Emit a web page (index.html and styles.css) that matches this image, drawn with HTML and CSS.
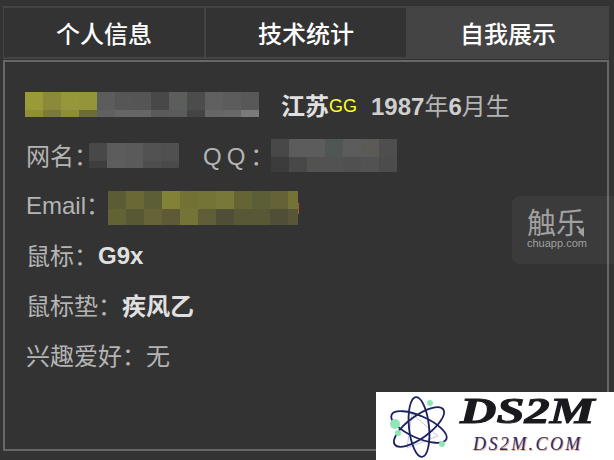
FILE: index.html
```html
<!DOCTYPE html>
<html lang="zh-CN">
<head>
    <meta charset="UTF-8">
    <title>个人信息</title>
    <link rel="stylesheet" href="styles.css">
</head>
<body>
    <div class="profile">
        <!-- tabs -->
        <div class="tabs">
            <div class="tab">个人信息</div>
            <div class="tab">技术统计</div>
            <div class="tab tab-active">自我展示</div>
        </div>

        <!-- info panel -->
        <div class="panel">
            <div class="row">
                <svg class="mosaic mosaic-id" width="234" height="25" shape-rendering="crispEdges">
                    <rect x="0" width="18" height="18" fill="#9a9a38"/><rect x="18" width="18" height="18" fill="#8a8a3a"/><rect x="36" width="18" height="18" fill="#96963a"/><rect x="54" width="18" height="18" fill="#94943a"/><rect x="72" width="18" height="18" fill="#5c5c5c"/><rect x="90" width="18" height="18" fill="#565656"/><rect x="108" width="18" height="18" fill="#555555"/><rect x="126" width="18" height="18" fill="#484848"/><rect x="144" width="18" height="18" fill="#5c5e5c"/><rect x="162" width="18" height="18" fill="#4c4c4c"/><rect x="180" width="18" height="18" fill="#606060"/><rect x="198" width="18" height="18" fill="#5c5c5c"/><rect x="216" width="18" height="18" fill="#585858"/>
                    <rect x="0" y="18" width="18" height="7" fill="#8f8f38"/><rect x="18" y="18" width="18" height="7" fill="#7a7a3c"/><rect x="36" y="18" width="18" height="7" fill="#8c8c3a"/><rect x="54" y="18" width="18" height="7" fill="#6c6c3a"/><rect x="72" y="18" width="18" height="7" fill="#606060"/><rect x="90" y="18" width="18" height="7" fill="#666666"/><rect x="108" y="18" width="18" height="7" fill="#666666"/><rect x="126" y="18" width="18" height="7" fill="#5a5a5a"/><rect x="144" y="18" width="18" height="7" fill="#5a5c5c"/><rect x="162" y="18" width="18" height="7" fill="#444444"/><rect x="180" y="18" width="18" height="7" fill="#666666"/><rect x="198" y="18" width="18" height="7" fill="#686868"/><rect x="216" y="18" width="18" height="7" fill="#7a7a7a"/>
                </svg>
                <b class="place">江苏</b><span class="gg">GG</span>
                <span class="birth"><b>1987</b>年<b>6</b>月生</span>
            </div>
            <div class="row">
                <span>网名：</span>
                <svg class="mosaic mosaic-name" width="90" height="25" shape-rendering="crispEdges">
                    <rect x="0" width="18" height="18" fill="#484848"/><rect x="18" width="18" height="18" fill="#5c5c5c"/><rect x="36" width="18" height="18" fill="#5a5a5a"/><rect x="54" width="18" height="18" fill="#525252"/><rect x="72" width="18" height="18" fill="#505050"/>
                    <rect x="0" y="18" width="18" height="7" fill="#3e3e3e"/><rect x="18" y="18" width="18" height="7" fill="#5e5e5e"/><rect x="36" y="18" width="18" height="7" fill="#5a5a5a"/><rect x="54" y="18" width="18" height="7" fill="#4e4e4e"/><rect x="72" y="18" width="18" height="7" fill="#4a4a4a"/>
                </svg>
                <span class="qq">QQ：</span>
                <svg class="mosaic mosaic-qq" width="126" height="33" shape-rendering="crispEdges">
                    <rect x="0" width="18" height="18" fill="#484848"/><rect x="18" width="18" height="18" fill="#5c5c5c"/><rect x="36" width="18" height="18" fill="#5c5c5c"/><rect x="54" width="18" height="18" fill="#505654"/><rect x="72" width="18" height="18" fill="#5c5c5c"/><rect x="90" width="18" height="18" fill="#5c5a56"/><rect x="108" width="18" height="18" fill="#4e4e4e"/>
                    <rect x="0" y="18" width="18" height="15" fill="#3c3c3c"/><rect x="18" y="18" width="18" height="15" fill="#484848"/><rect x="36" y="18" width="18" height="15" fill="#525250"/><rect x="54" y="18" width="18" height="15" fill="#525252"/><rect x="72" y="18" width="18" height="15" fill="#505050"/><rect x="90" y="18" width="18" height="15" fill="#525252"/><rect x="108" y="18" width="18" height="15" fill="#4c4c4c"/>
                </svg>
            </div>
            <div class="row">
                <span class="email-label">Email：</span>
                <svg class="mosaic mosaic-email" width="191" height="34" shape-rendering="crispEdges">
                    <rect x="0" width="18" height="18" fill="#5c5c34"/><rect x="18" width="18" height="18" fill="#6a6834"/><rect x="36" width="18" height="18" fill="#5c5e36"/><rect x="54" width="18" height="18" fill="#828236"/><rect x="72" width="18" height="18" fill="#727234"/><rect x="90" width="18" height="18" fill="#747436"/><rect x="108" width="18" height="18" fill="#787838"/><rect x="126" width="18" height="18" fill="#646434"/><rect x="144" width="18" height="18" fill="#5c5e36"/><rect x="162" width="18" height="18" fill="#646236"/><rect x="180" width="10" height="18" fill="#737336"/>
                    <rect x="0" y="18" width="18" height="16" fill="#626234"/><rect x="18" y="18" width="18" height="16" fill="#585834"/><rect x="36" y="18" width="18" height="16" fill="#666436"/><rect x="54" y="18" width="18" height="16" fill="#5e5a36"/><rect x="72" y="18" width="18" height="16" fill="#747436"/><rect x="90" y="18" width="18" height="16" fill="#605e36"/><rect x="108" y="18" width="18" height="16" fill="#504e36"/><rect x="126" y="18" width="18" height="16" fill="#585836"/><rect x="144" y="18" width="18" height="16" fill="#585836"/><rect x="162" y="18" width="18" height="16" fill="#504e36"/><rect x="180" y="18" width="10" height="16" fill="#585636"/>
                    <rect x="190" y="12" width="1" height="11" fill="#b0552a"/>
                </svg>
            </div>
            <div class="row"><span>鼠标：</span><b class="mouse">G9x</b></div>
            <div class="row"><span>鼠标垫：</span><b>疾风乙</b></div>
            <div class="row"><span>兴趣爱好：</span><span>无</span></div>
        </div>
    </div>

    <!-- watermarks -->
    <div class="chuapp">
        <div class="chuapp-name">触乐</div>
        <div class="chuapp-url">chuapp.com</div>
        <div class="chuapp-mark"></div>
    </div>
    <div class="ds2m">
        <svg class="ds2m-atom" width="84" height="68" viewBox="0 0 84 68" fill="none">
            <path d="M36 22 L62 44 L31 56 Z" stroke="#c4c8d4" stroke-width="1"/>
            <g stroke="#1c2260" stroke-width="1.8">
                <ellipse cx="43" cy="35" rx="30" ry="11" transform="rotate(24 43 35)"/>
                <ellipse cx="43" cy="35" rx="30" ry="11" transform="rotate(-36 43 35)"/>
                <ellipse cx="43" cy="35" rx="10" ry="30" transform="rotate(-6 43 35)"/>
            </g>
            <circle cx="19" cy="32" r="5" fill="#8ee8b4"/>
            <circle cx="54" cy="11" r="3" fill="#8ee8b4"/>
            <circle cx="22" cy="41" r="3" fill="#8ee8b4"/>
            <circle cx="66" cy="52" r="3" fill="#8ee8b4"/>
        </svg>
        <div class="ds2m-text">
            <div class="ds2m-name">DS2M</div>
            <div class="ds2m-url">DS2M.COM</div>
        </div>
    </div>
</body>
</html>
```

FILE: styles.css
```css
html, body {
    margin: 0;
    padding: 0;
}

body {
    position: relative;
    width: 614px;
    height: 460px;
    overflow: hidden;
    background-color: #333333;
    color: #b4b4b4;
    font-family: "Liberation Sans", "Noto Sans CJK SC", sans-serif;
    font-size: 24px;
}

.profile {
    padding: 6px 5px 0 3px;
}

.tabs {
    display: flex;
    height: 53px;
}

.tab {
    flex: 1;
    display: flex;
    align-items: center;
    justify-content: center;
    border: 2px solid #444444;
    border-left-width: 1px;
    border-right-width: 1px;
    color: #ffffff;
    font-size: 24px;
    font-weight: 500;
}

.tab-active {
    background-color: #444444;
}

.panel {
    height: 391px;
    margin-top: 1px;
    padding: 17px 0 0 21px;
    border: 2px solid #666666;
    box-sizing: border-box;
}

.row {
    display: flex;
    align-items: center;
    height: 50px;
}

.row b {
    color: #e0e0e0;
}

.mosaic {
    flex: none;
}

.mosaic-id {
    margin: 1px 0 0 -1px;
}

.mosaic-name {
    margin: 3px 24px 0 -9px;
}

.mosaic-qq {
    margin: 3px 0 0 -8px;
}

.mosaic-email {
    margin: 8px 0 0 -2px;
}

.email-label {
    margin-bottom: 2px;
}

.mouse {
    margin-top: 4px;
}

.place {
    margin-left: 22px;
}

.gg {
    color: #ffff33;
    font-size: 18px;
    margin-top: 4px;
}

.birth {
    margin-left: 14px;
}

.row .birth b {
    color: #cfcfcf;
}

.qq {
    letter-spacing: 5px;
}

/* chuapp badge */
.chuapp {
    position: absolute;
    left: 512px;
    top: 196px;
    width: 102px;
    height: 68px;
    box-sizing: border-box;
    padding-left: 15px;
    border-radius: 8px 0 0 8px;
    background-color: rgba(255, 255, 255, 0.045);
    color: #a0a0a0;
}

.chuapp-name {
    margin-top: 10px;
    font-family: "Noto Sans CJK SC", sans-serif;
    font-size: 29px;
    line-height: 30px;
}

.chuapp-url {
    font-size: 11px;
    line-height: 13px;
    margin-top: 1px;
}

.chuapp-mark {
    position: absolute;
    left: 66px;
    top: 31px;
    border-style: solid;
    border-width: 5px 6px 5px 0;
    border-color: transparent #a0a0a0 transparent transparent;
}

/* ds2m logo */
.ds2m {
    position: absolute;
    left: 376px;
    top: 392px;
    display: flex;
    width: 238px;
    height: 68px;
    background-color: #ffffff;
}

.ds2m-atom {
    flex: none;
    filter: blur(0.3px);
}

.ds2m-name {
    color: #1a1a1e;
    font-family: "Liberation Serif", serif;
    font-style: italic;
    font-weight: bold;
    font-size: 36px;
    line-height: 36px;
    margin-top: 1px;
    -webkit-text-stroke: 1px #1a1a1e;
    transform: scaleX(1.4);
    transform-origin: left center;
}

.ds2m-url {
    margin: 5px 0 0 13px;
    color: #2a2c6a;
    font-family: "Liberation Serif", serif;
    font-style: italic;
    font-size: 18px;
    line-height: 20px;
    letter-spacing: 2.4px;
    text-shadow: 1px 1px 0 #f0b090;
}
```
